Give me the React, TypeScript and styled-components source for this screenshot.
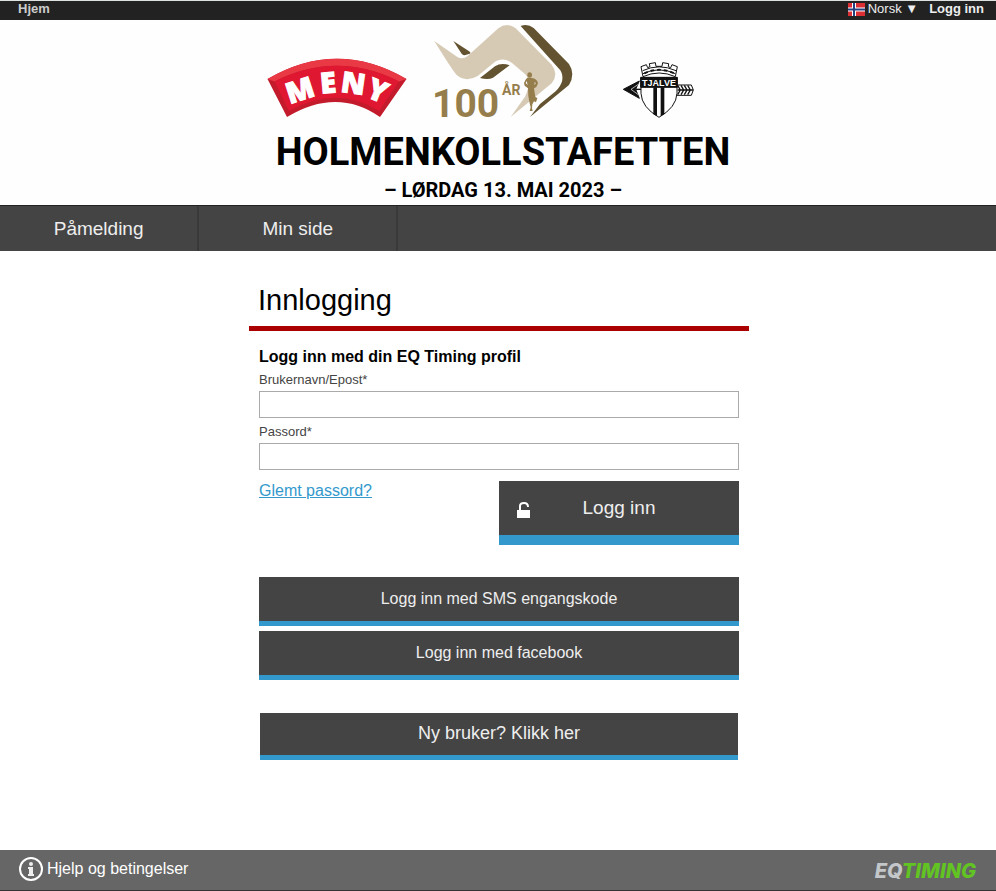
import React from "react";
import styled, { createGlobalStyle } from "styled-components";

const GlobalStyle = createGlobalStyle`
  * { box-sizing: border-box; }
  body {
    margin: 0;
    background: #fff;
    color: #000;
    font-family: "Liberation Sans", Arial, sans-serif;
    font-size: 16px;
  }
  a { text-decoration: none; }
`;

const Page = styled.div`
  min-height: 100vh;
  display: flex;
  flex-direction: column;
`;

const TopBar = styled.div`
  display: flex;
  justify-content: space-between;
  height: 20px;
  padding: 0 12px 0 18px;
  background: #222;
  border-top: 1px solid #dde1e0;
  font-size: 13px;
  line-height: 16px;
`;

const TopGroup = styled.div`
  display: flex;
  align-items: flex-start;
  gap: 11px;
`;

const TopLink = styled.a<{ $muted?: boolean }>`
  color: ${(p) => (p.$muted ? "#ccc" : "#eee")};
  font-weight: bold;
`;

const LanguageButton = styled.button`
  display: flex;
  align-items: flex-start;
  gap: 3px;
  padding: 0;
  border: 0;
  background: none;
  color: #eee;
  font: inherit;
  svg { margin-top: 2px; }
`;

const Masthead = styled.header`
  display: flex;
  flex-direction: column;
  align-items: center;
  height: 185px;
  padding-left: 10px;
  background: #fefefe;
  svg { display: block; }
`;

const EventName = styled.h1`
  margin: 4px 0 0;
  font-family: Roboto, sans-serif;
  font-size: 38px;
  line-height: 48px;
  font-weight: 700;
`;

const EventDate = styled.p`
  margin: 2px 0 0;
  font-family: Roboto, sans-serif;
  font-size: 20px;
  line-height: 24px;
  font-weight: 700;
`;

const Nav = styled.nav`
  display: flex;
  height: 46px;
  background: #444;
  border-top: 1px solid #222;
`;

const NavLink = styled.a`
  width: 20%;
  border-right: 2px solid #393939;
  color: #eee;
  font-size: 19px;
  line-height: 45px;
  text-align: center;
`;

const Main = styled.main`
  flex: 1;
  padding: 32px 0 90px 2px;
`;

const Column = styled.div`
  width: 100%;
  max-width: 500px;
  margin: 0 auto;
`;

const Title = styled.h2`
  margin: 0;
  padding: 0 9px;
  height: 48px;
  border-bottom: 5px solid #a00;
  font-size: 29px;
  line-height: 34px;
  font-weight: normal;
`;

const Form = styled.form`
  display: flex;
  flex-direction: column;
  padding: 16px 10px 0;
`;

const FormTitle = styled.h3`
  margin: 0 0 4px;
  font-size: 16px;
  line-height: 20px;
`;

const Label = styled.label`
  color: #444;
  font-size: 13px;
  line-height: 18px;
`;

const Input = styled.input`
  width: 100%;
  height: 27px;
  margin: 2px 0 5px;
  padding: 0 8px;
  border: 1px solid #aaa;
  background: #fff;
  font: inherit;
`;

const LoginRow = styled.div`
  display: flex;
  justify-content: space-between;
  align-items: flex-start;
  margin-top: 6px;
`;

const ForgotLink = styled.a`
  color: #39c;
  line-height: 20px;
  text-decoration: underline;
`;

const LoginButton = styled.button`
  display: grid;
  grid-template-columns: 16px 1fr 16px;
  align-items: center;
  width: 50%;
  height: 64px;
  padding: 0 16px;
  border: 0;
  border-bottom: 10px solid #39c;
  background: #444;
  color: #eee;
  font: inherit;
  font-size: 19px;
  svg { margin-top: 4px; }
`;

const AltList = styled.div`
  display: flex;
  flex-direction: column;
  gap: 5px;
  padding: 32px 10px 0;
`;

const WideLink = styled.a<{ $large?: boolean }>`
  display: block;
  margin: ${(p) => (p.$large ? "33px 11px 0" : "0")};
  border-bottom: 5px solid #39c;
  background: #444;
  color: #eee;
  font-size: ${(p) => (p.$large ? "18px" : "16px")};
  line-height: ${(p) => (p.$large ? "41px" : "43px")};
  padding-bottom: 1px;
  text-align: center;
`;

const Footer = styled.footer`
  display: flex;
  justify-content: space-between;
  align-items: center;
  height: 41px;
  padding: 0 20px 0 18px;
  background: #666;
  border-bottom: 1px solid #333;
`;

const HelpLink = styled.a`
  display: flex;
  align-items: center;
  gap: 4px;
  padding-bottom: 2px;
  color: #fff;
`;

const Brand = styled.a`
  padding-top: 2px;
  color: #c4c7ca;
  font-family: Inter, sans-serif;
  font-size: 20px;
  line-height: 24px;
  font-weight: 800;
  font-style: italic;
`;

const BrandAccent = styled.span`
  color: #62c422;
`;

const Flag = () => (
  <svg width="17" height="13" viewBox="0 0 17 13" aria-hidden="true">
    <rect width="17" height="13" fill="#dc2f34" />
    <path d="M0 6.5H17M6 0V13" stroke="#fff" strokeWidth="4" />
    <path d="M0 6.5H17M6 0V13" stroke="#26407f" strokeWidth="2" />
  </svg>
);

const Logos = () => (
  <svg width="480" height="104" viewBox="263 20 480 104" role="img" aria-label="MENY, 100 år, Tjalve">
    <path d="M267.500 79Q337 38.500 406.500 79L380 117Q337 87 287 117Z" fill="#c31b2c" />
    <path d="M267.500 79Q337 38.500 406.500 79L399 81.500Q337 50 274.500 81.500Z" fill="#e93945" />
    <path d="M274.500 81.500Q337 50 399 81.500L379 111Q337 84.500 289 111Z" fill="#df1731" />
    <g fill="#fff" stroke="#fff" strokeWidth="1" fontFamily="Open Sans" fontWeight="800" fontSize="29" textAnchor="middle">
      <text transform="translate(303 100) rotate(-18)">M</text>
      <text transform="translate(329 93) rotate(-5)">E</text>
      <text transform="translate(352 93.500) rotate(8)">N</text>
      <text transform="translate(374 100) rotate(22)">Y</text>
    </g>

    <g transform="translate(425 20) scale(.333333)">
      <path d="M28 63L96 110Q112 121 128 108L220 25Q246 5 272 25L380 134Q402 162 380 190L257 291L300 230Q322 184 300 162L262 130Q238 110 212 124L158 168Q124 188 96 166Q84 154 28 63Z" fill="#d6cab5" />
      <path d="M287 18Q308 10 326 24L432 132Q452 162 432 195L315 291L345 252L392 214Q424 182 406 151Z" fill="#635330" />
      <path d="M85 63L130 92Q140 98 134 101L119 106Q114 106 110 101ZM165 174L210 139Q229 126 254 136L204 173Q190 180 165 174Z" fill="#635330" />
      <ellipse cx="314" cy="165" rx="7" ry="8" fill="#967d4c" />
      <path d="M308 173L320 174Q337 176 339 190L334 201L327 205L331 231L337 234L333 247L327 244L322 253L321 264L323 273L314 273L317 262L313 245L310 228L309 205L299 197L297 189L303 177ZM305 183L302 189L308 195ZM329 185L328 196L333 190Z" fill="#967d4c" fillRule="evenodd" />
    </g>
    <g fill="#967d4c" fontFamily="Roboto" fontWeight="700">
      <text x="432" y="117" fontSize="39">100</text>
      <text x="502" y="95" fontSize="14">ÅR</text>
    </g>

    <g transform="translate(615 55) scale(.333333)" stroke="#111" fill="none" strokeWidth="3">
      <path d="M25 103L73 78L62 103L73 130Z" fill="#111" />
      <path d="M62 103H78" strokeWidth="4" />
      <path d="M48 103L70 88M48 103L70 119" stroke="#fff" strokeWidth="2" />
      <path d="M184 90H229L235 105L229 121H184Z" fill="#fff" />
      <path d="M188 91l8 14-8 14M198 91l8 14-8 14M208 91l8 14-8 14M218 91l8 14-8 14M188 105H234" strokeWidth="4" />
      <path d="M78 68V115Q80 157 132 187Q184 157 186 115V68Z" fill="#fff" />
      <path d="M115 97H126V184L115 178ZM137 97H148V178L137 184Z" fill="#111" stroke="none" />
      <path d="M77 67H187V97H77Z" fill="#111" />
      <path d="M84 65L78 35L94 29L98 38L105 35L103 26L121 23L123 34L141 34L143 23L161 26L160 35L167 38L171 29L187 35L181 65Q132 43 84 65Z" fill="#fff" />
      <path d="M83 47Q132 24 183 47M84 56Q132 33 181 56" />
      <path d="M88 55Q132 34 178 55" strokeWidth="6" strokeDasharray="11 9" />
      <text x="132" y="92" fill="#fff" stroke="none" fontFamily="Liberation Sans" fontWeight="700" fontSize="27" textAnchor="middle">TJALVE</text>
    </g>
  </svg>
);

const Unlock = () => (
  <svg width="16" height="18" viewBox="0 0 16 18" aria-hidden="true">
    <rect x="2" y="9" width="13" height="8" fill="#fff" />
    <path d="M5 10V5Q5 2 9 2Q13 2 13 6" fill="none" stroke="#fff" strokeWidth="2" />
  </svg>
);

const Info = () => (
  <svg width="25" height="26" viewBox="0 0 25 26" aria-hidden="true">
    <circle cx="13" cy="13" r="11" fill="none" stroke="#fff" strokeWidth="2" />
    <circle cx="13" cy="8" r="2" fill="#eee" />
    <path d="M10 11H15V18H16V20H10V18H11V13H10Z" fill="#eee" />
  </svg>
);

export default function App() {
  return (
    <>
      <GlobalStyle />
      <Page>
        <TopBar>
          <TopLink href="#" $muted>Hjem</TopLink>
          <TopGroup>
            <LanguageButton type="button">
              <Flag />
              <span>Norsk ▼</span>
            </LanguageButton>
            <TopLink href="#">Logg inn</TopLink>
          </TopGroup>
        </TopBar>
        <Masthead>
          <Logos />
          <EventName>HOLMENKOLLSTAFETTEN</EventName>
          <EventDate>– LØRDAG 13. MAI 2023 –</EventDate>
        </Masthead>
        <Nav>
          <NavLink href="#">Påmelding</NavLink>
          <NavLink href="#">Min side</NavLink>
        </Nav>
        <Main>
          <Column>
            <Title>Innlogging</Title>
            <Form onSubmit={(e) => e.preventDefault()}>
              <FormTitle>Logg inn med din EQ Timing profil</FormTitle>
              <Label htmlFor="user">Brukernavn/Epost*</Label>
              <Input id="user" type="text" />
              <Label htmlFor="password">Passord*</Label>
              <Input id="password" type="password" />
              <LoginRow>
                <ForgotLink href="#">Glemt passord?</ForgotLink>
                <LoginButton type="submit">
                  <Unlock />
                  <span>Logg inn</span>
                </LoginButton>
              </LoginRow>
            </Form>
            <AltList>
              <WideLink href="#">Logg inn med SMS engangskode</WideLink>
              <WideLink href="#">Logg inn med facebook</WideLink>
            </AltList>
            <WideLink href="#" $large>Ny bruker? Klikk her</WideLink>
          </Column>
        </Main>
        <Footer>
          <HelpLink href="#">
            <Info />
            <span>Hjelp og betingelser</span>
          </HelpLink>
          <Brand href="#">EQ<BrandAccent>TIMING</BrandAccent></Brand>
        </Footer>
      </Page>
    </>
  );
}
